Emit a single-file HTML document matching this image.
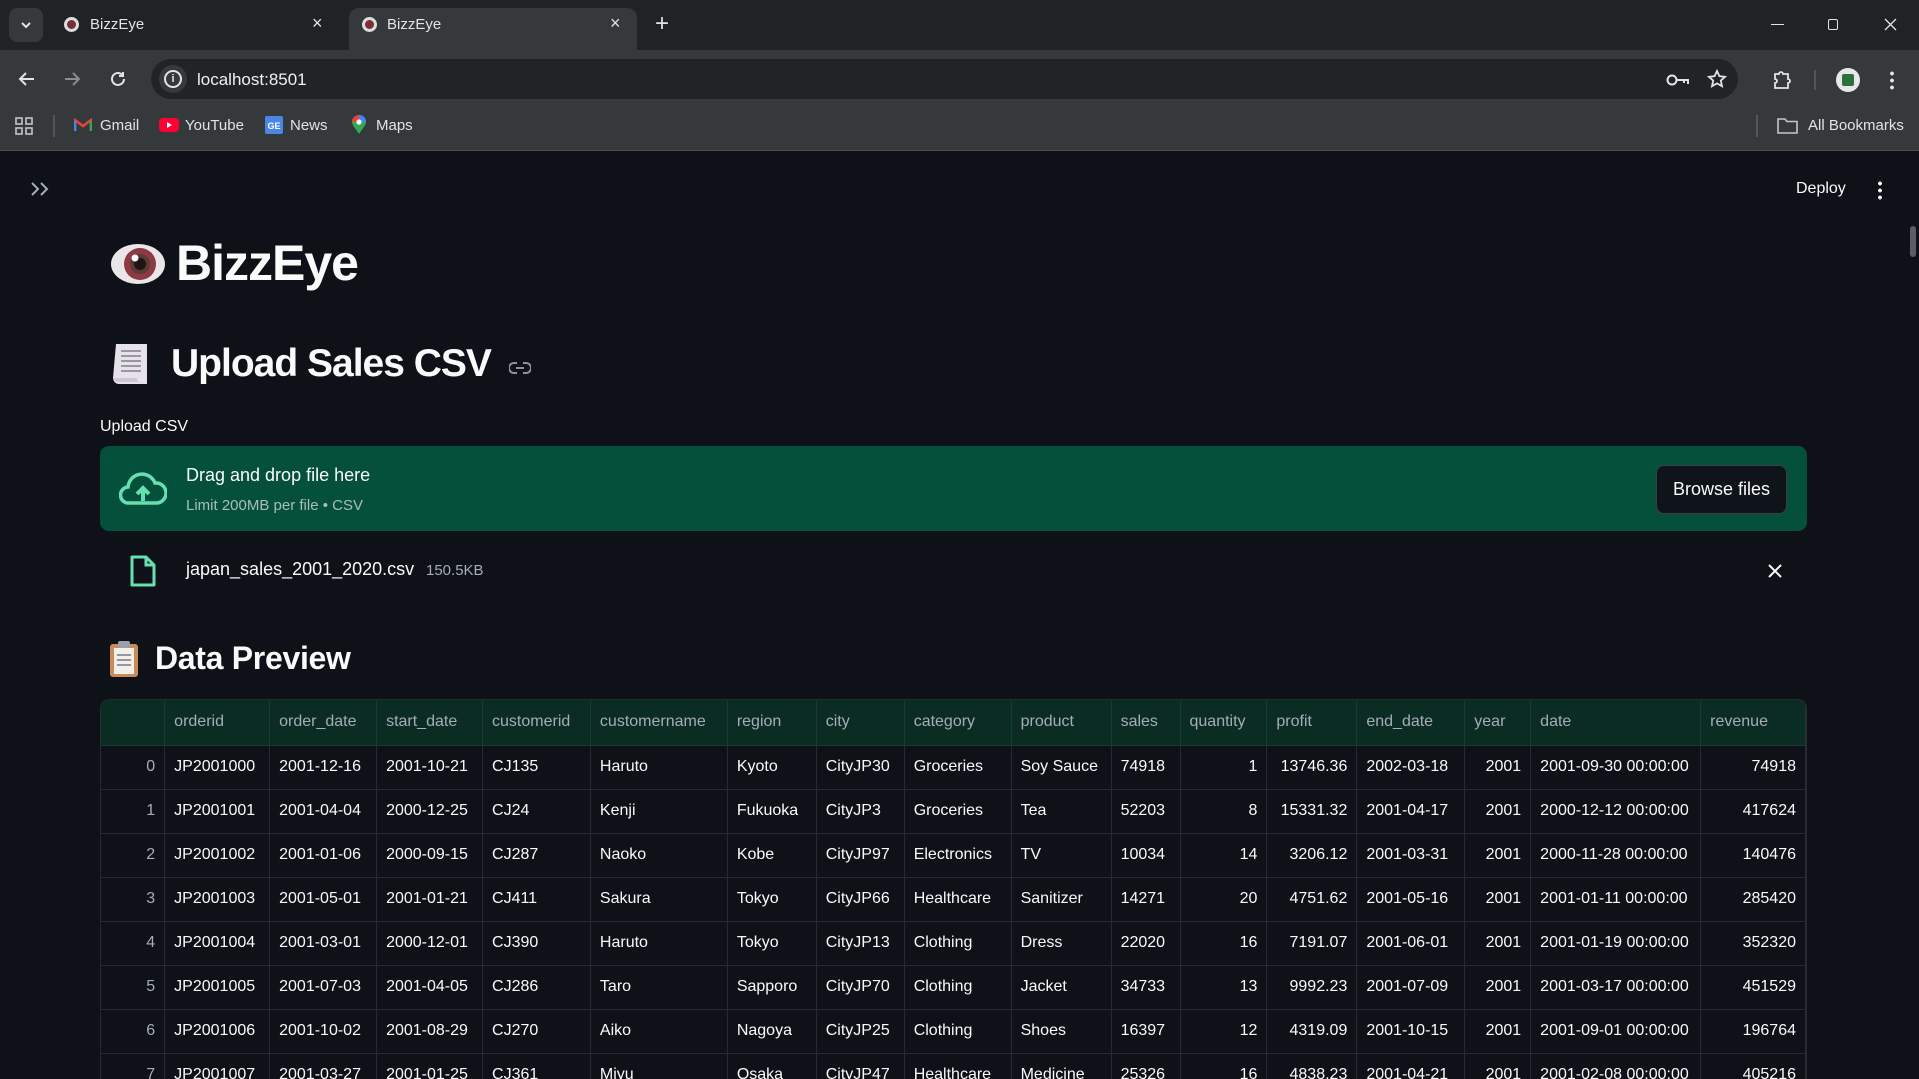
<!DOCTYPE html>
<html style="overflow:hidden;width:1919px;height:1079px"><head><meta charset="utf-8"><style>
*{box-sizing:border-box;margin:0;padding:0}
body{width:1919px;height:1079px;overflow:hidden;background:#0e1117;font-family:"Liberation Sans",sans-serif;color:#fafafa;position:relative}
.a{position:absolute}
.tabbar{left:0;top:0;width:1919px;height:50px;background:#1f2326}
.toolbar{left:0;top:50px;width:1919px;height:50px;background:#35393c}
.bmbar{left:0;top:100px;width:1919px;height:51px;background:#35393c;border-bottom:1px solid #4b4f52}
.ct{color:#e3e3e3;font-size:15px}
table{border-collapse:collapse;table-layout:fixed;font-size:16px}
td,th{height:44px;border-right:1px solid #262a33;border-bottom:1px solid #262a33;padding:0 9px;white-space:nowrap;overflow:hidden;font-weight:normal;text-align:left}
th{height:45px;background:#0b2c23;color:#a6acb9;border-color:#1a3b31}
td.r{text-align:right}
td.i{color:#a6acb9;text-align:right}
</style></head><body>
<!-- tab bar -->
<div class="a tabbar"></div>
<div class="a" style="left:9px;top:8px;width:34px;height:34px;border-radius:8px;background:#35393c"></div>
<svg class="a" style="left:19px;top:19px" width="14" height="12"><path d="M3 4l4 4 4-4" stroke="#e3e3e3" stroke-width="2" fill="none"/></svg>
<div class="a" style="left:64px;top:17px;width:15px;height:15px;border-radius:50%;background:#ddd"><div style="margin:3px;width:9px;height:9px;border-radius:50%;background:#7a2e36"></div></div>
<div class="a ct" style="left:90px;top:16px">BizzEye</div>
<div class="a ct" style="left:312px;top:13px;font-size:18px">×</div>
<div class="a" style="left:349px;top:8px;width:288px;height:42px;border-radius:10px 10px 0 0;background:#35393c"></div>
<div class="a" style="left:362px;top:17px;width:15px;height:15px;border-radius:50%;background:#ddd"><div style="margin:3px;width:9px;height:9px;border-radius:50%;background:#7a2e36"></div></div>
<div class="a ct" style="left:387px;top:16px">BizzEye</div>
<div class="a ct" style="left:610px;top:13px;font-size:18px">×</div>
<div class="a ct" style="left:655px;top:10px;font-size:24px">+</div>
<div class="a" style="left:1771px;top:24px;width:13px;height:1px;background:#e3e3e3"></div>
<div class="a" style="left:1828px;top:19px;width:10px;height:11px;border:1px solid #e3e3e3;border-radius:2px"></div>
<svg class="a" style="left:1884px;top:18px" width="13" height="13"><path d="M1 1l11 11M12 1L1 12" stroke="#e3e3e3" stroke-width="1.3"/></svg>
<!-- toolbar -->
<div class="a toolbar"></div>
<svg class="a" style="left:18px;top:70px" width="18" height="18"><path d="M16 9H3M8 3L2 9l6 6" stroke="#e3e3e3" stroke-width="2" fill="none"/></svg>
<svg class="a" style="left:63px;top:70px" width="18" height="18"><path d="M2 9h13M10 3l6 6-6 6" stroke="#8a8d90" stroke-width="2" fill="none"/></svg>
<svg class="a" style="left:109px;top:70px" width="18" height="18"><path d="M15 9a6 6 0 1 1-2-4.5M14 2v4h-4" stroke="#e3e3e3" stroke-width="2" fill="none"/></svg>
<div class="a" style="left:151px;top:59px;width:1587px;height:40px;border-radius:20px;background:#202427"></div>
<div class="a" style="left:159px;top:65px;width:28px;height:28px;border-radius:50%;background:#35393c"></div>
<div class="a" style="left:164px;top:70px;width:18px;height:18px;border-radius:50%;border:2px solid #e3e3e3;font-size:11px;font-weight:bold;text-align:center;line-height:14px;color:#e3e3e3">i</div>
<div class="a" style="left:197px;top:70px;font-size:17px;color:#f0f0f0">localhost:8501</div>
<svg class="a" style="left:1666px;top:72px" width="24" height="16"><circle cx="6" cy="8" r="4.5" stroke="#e3e3e3" stroke-width="2" fill="none"/><path d="M10 8h12v4M18 8v3" stroke="#e3e3e3" stroke-width="2" fill="none"/></svg>
<svg class="a" style="left:1707px;top:69px" width="20" height="20"><path d="M10 2l2.4 5.2 5.6.6-4.2 3.8 1.2 5.6L10 14.4 5 17.2l1.2-5.6L2 7.8l5.6-.6z" stroke="#e3e3e3" stroke-width="1.8" fill="none"/></svg>
<svg class="a" style="left:1772px;top:69px" width="20" height="22"><path d="M3 5h4a2 2 0 0 1 4 0h5v5a2 2 0 0 1 0 4v5H3v-5a2 2 0 0 0 0-4z" stroke="#e3e3e3" stroke-width="1.8" fill="none"/></svg>
<div class="a" style="left:1814px;top:70px;width:2px;height:20px;background:#555"></div>
<div class="a" style="left:1836px;top:68px;width:24px;height:24px;border-radius:50%;background:#e8e8e8"><div style="margin:6px 6px;width:12px;height:12px;background:#2f6e3e;border-radius:2px"></div></div>
<div class="a" style="left:1890px;top:70px;width:4px;height:20px;background:radial-gradient(circle,#e3e3e3 1.8px,transparent 2px) 0 0/4px 7px"></div>
<!-- bookmarks -->
<div class="a bmbar"></div>
<svg class="a" style="left:15px;top:117px" width="18" height="18"><g fill="none" stroke="#c4c7c5" stroke-width="1.6"><rect x="1" y="1" width="6" height="6"/><rect x="11" y="1" width="6" height="6"/><rect x="1" y="11" width="6" height="6"/><rect x="11" y="11" width="6" height="6"/></g></svg>
<div class="a" style="left:53px;top:115px;width:2px;height:22px;background:#555"></div>
<svg class="a" style="left:74px;top:118px" width="18" height="14"><path d="M1 13V2l8 6 8-6v11" stroke="#ea4335" stroke-width="2.5" fill="none"/><path d="M1 13V3" stroke="#4285f4" stroke-width="2.5"/><path d="M17 13V3" stroke="#34a853" stroke-width="2.5"/></svg>
<div class="a ct" style="left:100px;top:117px">Gmail</div>
<div class="a" style="left:159px;top:118px;width:20px;height:14px;border-radius:4px;background:#ff0033"><div style="margin:4px 0 0 8px;width:0;height:0;border-left:5px solid #fff;border-top:3px solid transparent;border-bottom:3px solid transparent"></div></div>
<div class="a ct" style="left:185px;top:117px">YouTube</div>
<div class="a" style="left:265px;top:116px;width:18px;height:18px;border-radius:2px;background:#4a86e8;font-size:9px;font-weight:bold;color:#fff;text-align:center;line-height:20px">GE</div>
<div class="a ct" style="left:290px;top:117px">News</div>
<svg class="a" style="left:351px;top:115px" width="16" height="20"><path d="M8 19C4 13 1 10 1 7a7 7 0 0 1 14 0c0 3-3 6-7 12z" fill="#34a853"/><path d="M1 7a7 7 0 0 1 7-7v7z" fill="#ea4335"/><path d="M8 0a7 7 0 0 1 7 7H8z" fill="#4285f4"/><circle cx="8" cy="7" r="2.6" fill="#fff"/></svg>
<div class="a ct" style="left:376px;top:117px">Maps</div>
<div class="a" style="left:1756px;top:115px;width:2px;height:22px;background:#555"></div>
<svg class="a" style="left:1777px;top:117px" width="21" height="17"><path d="M1 2h7l2 2.5h10V16H1z" stroke="#c4c7c5" stroke-width="1.6" fill="none"/></svg>
<div class="a ct" style="left:1808px;top:117px">All Bookmarks</div>
<!-- app header -->
<svg class="a" style="left:30px;top:181px" width="20" height="16"><path d="M2 2l6 6-6 6M11 2l6 6-6 6" stroke="#a6acb9" stroke-width="2" fill="none"/></svg>
<div class="a" style="left:1796px;top:180px;font-size:16px;color:#fafafa">Deploy</div>
<div class="a" style="left:1878px;top:180px;width:4px;height:20px;background:radial-gradient(circle,#fafafa 1.8px,transparent 2px) 0 0/4px 7px"></div>
<div class="a" style="left:1910px;top:226px;width:6px;height:31px;border-radius:3px;background:#5a5d63"></div>
<!-- Title -->
<svg class="a" style="left:110px;top:241px" width="56" height="46"><ellipse cx="28" cy="23" rx="27" ry="20" fill="#e9e6ea"/><circle cx="30" cy="23" r="16" fill="#8e3a45"/><circle cx="30" cy="23" r="10" fill="#5a3a35"/><circle cx="30" cy="23" r="6" fill="#1e1416"/><circle cx="25" cy="17" r="3.5" fill="#fff"/></svg>
<div class="a" style="left:176px;top:234px;font-size:50px;font-weight:bold;letter-spacing:-1px">BizzEye</div>
<!-- Upload Sales CSV -->
<svg class="a" style="left:110px;top:341px" width="40" height="46"><path d="M6 3h31v40H9a6 6 0 0 1-6-6z" fill="#e6e2ea"/><path d="M3 37h24a4 4 0 0 0 6 4H9a6 6 0 0 1-6-4z" fill="#cdc6d6"/><g stroke="#9a95a3" stroke-width="2"><path d="M11 10h20M11 15h20M11 20h20M11 25h20M11 30h20"/></g></svg>
<div class="a" style="left:171px;top:342px;font-size:39px;font-weight:bold;letter-spacing:-1px">Upload Sales CSV</div>
<svg class="a" style="left:509px;top:362px" width="22" height="12"><path d="M8 1H5a5 5 0 0 0 0 10h3M14 1h3a5 5 0 0 1 0 10h-3M7 6h8" stroke="#8e929b" stroke-width="2" fill="none"/></svg>
<div class="a" style="left:100px;top:418px;font-size:16px">Upload CSV</div>
<!-- dropzone -->
<div class="a" style="left:100px;top:446px;width:1707px;height:85px;border-radius:9px;background:#05503a"></div>
<svg class="a" style="left:119px;top:472px" width="48" height="34"><path d="M12 31H10A8 8 0 0 1 9 15 14 14 0 0 1 36 11a10 10 0 0 1 2 20H12z" stroke="#66e0b0" stroke-width="3.5" fill="none"/><path d="M24 29V18M18 22l6-6 6 6" stroke="#66e0b0" stroke-width="4" fill="none"/></svg>
<div class="a" style="left:186px;top:465px;font-size:18px;color:#fafafa">Drag and drop file here</div>
<div class="a" style="left:186px;top:497px;font-size:15px;color:#a8bfb4">Limit 200MB per file • CSV</div>
<div class="a" style="left:1656px;top:465px;width:131px;height:49px;border-radius:8px;background:#0f141b;border:1px solid #3a3e47;font-size:18px;text-align:center;line-height:47px">Browse files</div>
<!-- file row -->
<svg class="a" style="left:130px;top:555px" width="26" height="32"><path d="M2 2h14l8 8v20H2z" stroke="#66e0b0" stroke-width="3" fill="none" stroke-linejoin="round"/><path d="M16 2v8h8" stroke="#66e0b0" stroke-width="3" fill="none"/></svg>
<div class="a" style="left:186px;top:559px;font-size:18px">japan_sales_2001_2020.csv</div>
<div class="a" style="left:426px;top:562px;font-size:15px;color:#a6acb9">150.5KB</div>
<svg class="a" style="left:1767px;top:563px" width="16" height="16"><path d="M2 2l12 12M14 2L2 14" stroke="#fafafa" stroke-width="2"/></svg>
<!-- Data Preview -->
<svg class="a" style="left:108px;top:640px" width="32" height="38"><rect x="2" y="4" width="28" height="33" rx="3" fill="#c98b5a"/><rect x="6" y="8" width="20" height="26" fill="#f3efe9"/><rect x="10" y="1" width="12" height="7" rx="2" fill="#9aa0a8"/><g stroke="#9a95a3" stroke-width="2"><path d="M9 15h14M9 20h14M9 25h14"/></g></svg>
<div class="a" style="left:155px;top:640px;font-size:32px;font-weight:bold;letter-spacing:-0.3px">Data Preview</div>
<!-- table -->
<div class="a" style="left:100px;top:699px;width:1707px;height:380px;border:1px solid #262a33;border-bottom:none;border-radius:9px 9px 0 0;overflow:hidden">
<table>
<colgroup><col style="width:64px"><col style="width:105px"><col style="width:107px"><col style="width:106px"><col style="width:108px"><col style="width:137px"><col style="width:89px"><col style="width:88px"><col style="width:107px"><col style="width:100px"><col style="width:69px"><col style="width:87px"><col style="width:90px"><col style="width:108px"><col style="width:66px"><col style="width:170px"><col style="width:105px"></colgroup>
<tr><th></th><th>orderid</th><th>order_date</th><th>start_date</th><th>customerid</th><th>customername</th><th>region</th><th>city</th><th>category</th><th>product</th><th>sales</th><th>quantity</th><th>profit</th><th>end_date</th><th>year</th><th>date</th><th>revenue</th></tr>
<tr><td class="i">0</td><td>JP2001000</td><td>2001-12-16</td><td>2001-10-21</td><td>CJ135</td><td>Haruto</td><td>Kyoto</td><td>CityJP30</td><td>Groceries</td><td>Soy Sauce</td><td>74918</td><td class="r">1</td><td class="r">13746.36</td><td>2002-03-18</td><td class="r">2001</td><td>2001-09-30 00:00:00</td><td class="r">74918</td></tr>
<tr><td class="i">1</td><td>JP2001001</td><td>2001-04-04</td><td>2000-12-25</td><td>CJ24</td><td>Kenji</td><td>Fukuoka</td><td>CityJP3</td><td>Groceries</td><td>Tea</td><td>52203</td><td class="r">8</td><td class="r">15331.32</td><td>2001-04-17</td><td class="r">2001</td><td>2000-12-12 00:00:00</td><td class="r">417624</td></tr>
<tr><td class="i">2</td><td>JP2001002</td><td>2001-01-06</td><td>2000-09-15</td><td>CJ287</td><td>Naoko</td><td>Kobe</td><td>CityJP97</td><td>Electronics</td><td>TV</td><td>10034</td><td class="r">14</td><td class="r">3206.12</td><td>2001-03-31</td><td class="r">2001</td><td>2000-11-28 00:00:00</td><td class="r">140476</td></tr>
<tr><td class="i">3</td><td>JP2001003</td><td>2001-05-01</td><td>2001-01-21</td><td>CJ411</td><td>Sakura</td><td>Tokyo</td><td>CityJP66</td><td>Healthcare</td><td>Sanitizer</td><td>14271</td><td class="r">20</td><td class="r">4751.62</td><td>2001-05-16</td><td class="r">2001</td><td>2001-01-11 00:00:00</td><td class="r">285420</td></tr>
<tr><td class="i">4</td><td>JP2001004</td><td>2001-03-01</td><td>2000-12-01</td><td>CJ390</td><td>Haruto</td><td>Tokyo</td><td>CityJP13</td><td>Clothing</td><td>Dress</td><td>22020</td><td class="r">16</td><td class="r">7191.07</td><td>2001-06-01</td><td class="r">2001</td><td>2001-01-19 00:00:00</td><td class="r">352320</td></tr>
<tr><td class="i">5</td><td>JP2001005</td><td>2001-07-03</td><td>2001-04-05</td><td>CJ286</td><td>Taro</td><td>Sapporo</td><td>CityJP70</td><td>Clothing</td><td>Jacket</td><td>34733</td><td class="r">13</td><td class="r">9992.23</td><td>2001-07-09</td><td class="r">2001</td><td>2001-03-17 00:00:00</td><td class="r">451529</td></tr>
<tr><td class="i">6</td><td>JP2001006</td><td>2001-10-02</td><td>2001-08-29</td><td>CJ270</td><td>Aiko</td><td>Nagoya</td><td>CityJP25</td><td>Clothing</td><td>Shoes</td><td>16397</td><td class="r">12</td><td class="r">4319.09</td><td>2001-10-15</td><td class="r">2001</td><td>2001-09-01 00:00:00</td><td class="r">196764</td></tr>
<tr><td class="i">7</td><td>JP2001007</td><td>2001-03-27</td><td>2001-01-25</td><td>CJ361</td><td>Miyu</td><td>Osaka</td><td>CityJP47</td><td>Healthcare</td><td>Medicine</td><td>25326</td><td class="r">16</td><td class="r">4838.23</td><td>2001-04-21</td><td class="r">2001</td><td>2001-02-08 00:00:00</td><td class="r">405216</td></tr>
</table></div>
</body></html>
